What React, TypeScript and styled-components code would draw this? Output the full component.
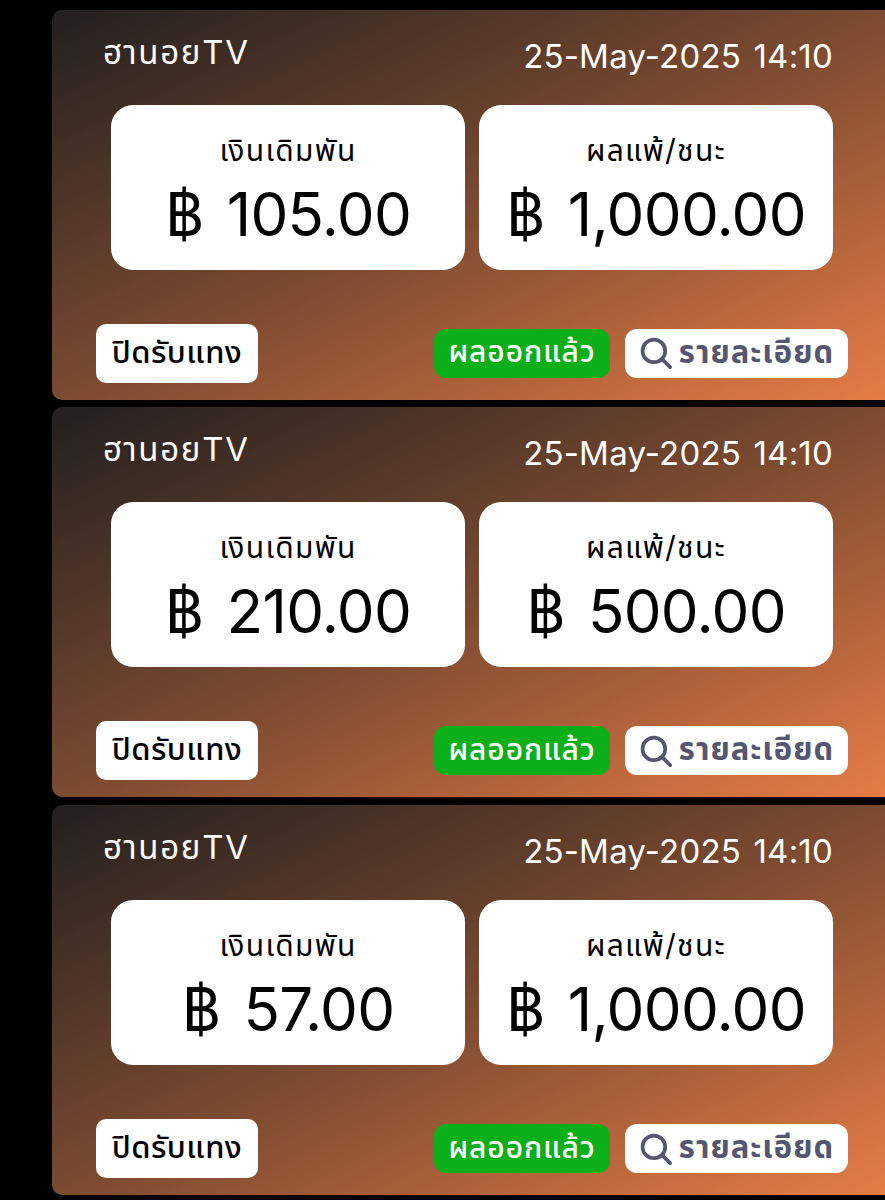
import React from "react";
import styled, { createGlobalStyle } from "styled-components";

const Global = createGlobalStyle`
  html, body { margin: 0; padding: 0; background: #000; }
  body { font-family: "Inter", "Noto Sans Thai", "Noto Sans", "Liberation Sans", sans-serif; }
`;
const Page = styled.div`
  width: 885px; height: 1200px; overflow: hidden; padding: 9.6px 0 0 52px; box-sizing: border-box;
  display: flex; flex-direction: column; gap: 7.8px;
`;
const Card = styled.div`
  width: 833px; height: 390px; flex: none; box-sizing: border-box; border-radius: 10px 0 0 10px;
  background: linear-gradient(to bottom right, #211f1f 0%, #7b4a30 50%, #e67c45 100%);
  padding: 19px 37px 0 44px; display: flex; flex-direction: column;
`;
const Top = styled.div`display: flex; justify-content: space-between; align-items: flex-start; padding: 0 15px 0 7px; color: #fff; height: 52px;`;
const Name = styled.div`font-size: 33px; line-height: 46px; letter-spacing: 1.7px;`;
const Time = styled.div`font-size: 33px; line-height: 54px; letter-spacing: 0.2px; font-weight: 400; word-spacing: 3px;`;
const Boxes = styled.div`display: flex; gap: 14px; margin: 24px 0 0 15px;`;
const Box = styled.div`
  width: 354px; height: 165px; background: #fff; border-radius: 22px; display: flex; flex-direction: column; align-items: center; color: #000; padding-top: 22px; box-sizing: border-box; flex: none;
`;
const Label = styled.div`font-size: 30px; line-height: 46px; letter-spacing: 1.3px;`;
const Amount = styled.div`font-size: 60px; line-height: 76px; letter-spacing: -0.7px; word-spacing: 7px; font-weight: 400; margin-top: 3px; white-space: pre;`;
const Bottom = styled.div`display: flex; align-items: center; margin-top: 54px; gap: 15px;`;
const Closed = styled.div`
  background: #fff; color: #000; border-radius: 10px; font-size: 31px; font-weight: 500; letter-spacing: 0.5px; width: 162px; height: 59px; display: flex; align-items: center; justify-content: center; margin-right: auto;
`;
const Status = styled.div`
  background: #0aaf1a; color: #fff; border-radius: 12px; font-size: 30px; font-weight: 500; letter-spacing: 0.9px; width: 176px; height: 49px; display: flex; align-items: center; justify-content: center;
`;
const Detail = styled.div`
  background: #fff; color: #55566f; border-radius: 12px; font-size: 31px; font-weight: 700; letter-spacing: 1px; width: 223px; height: 49px; display: flex; align-items: center; justify-content: center; gap: 6px;
`;
const data = [["105.00","1,000.00"],["210.00","500.00"],["57.00","1,000.00"]];
export default function App() {
  return <Page><Global />{data.map(([a,b],i)=>(
    <Card key={i}>
      <Top><Name>ฮานอยTV</Name><Time>25-May-2025 14:10</Time></Top>
      <Boxes>
        <Box><Label>เงินเดิมพัน</Label><Amount>฿ {a}</Amount></Box>
        <Box><Label>ผลแพ้/ชนะ</Label><Amount>฿ {b}</Amount></Box>
      </Boxes>
      <Bottom>
        <Closed>ปิดรับแทง</Closed>
        <Status>ผลออกแล้ว</Status>
        <Detail>
          <svg width="34" height="34" viewBox="0 0 24 24" fill="none" stroke="#55566f" strokeWidth="2.6" strokeLinecap="round"><circle cx="10.5" cy="10.5" r="8"/><path d="M16.5 16.5 22 22"/></svg>
          รายละเอียด
        </Detail>
      </Bottom>
    </Card>))}
  </Page>;
}
